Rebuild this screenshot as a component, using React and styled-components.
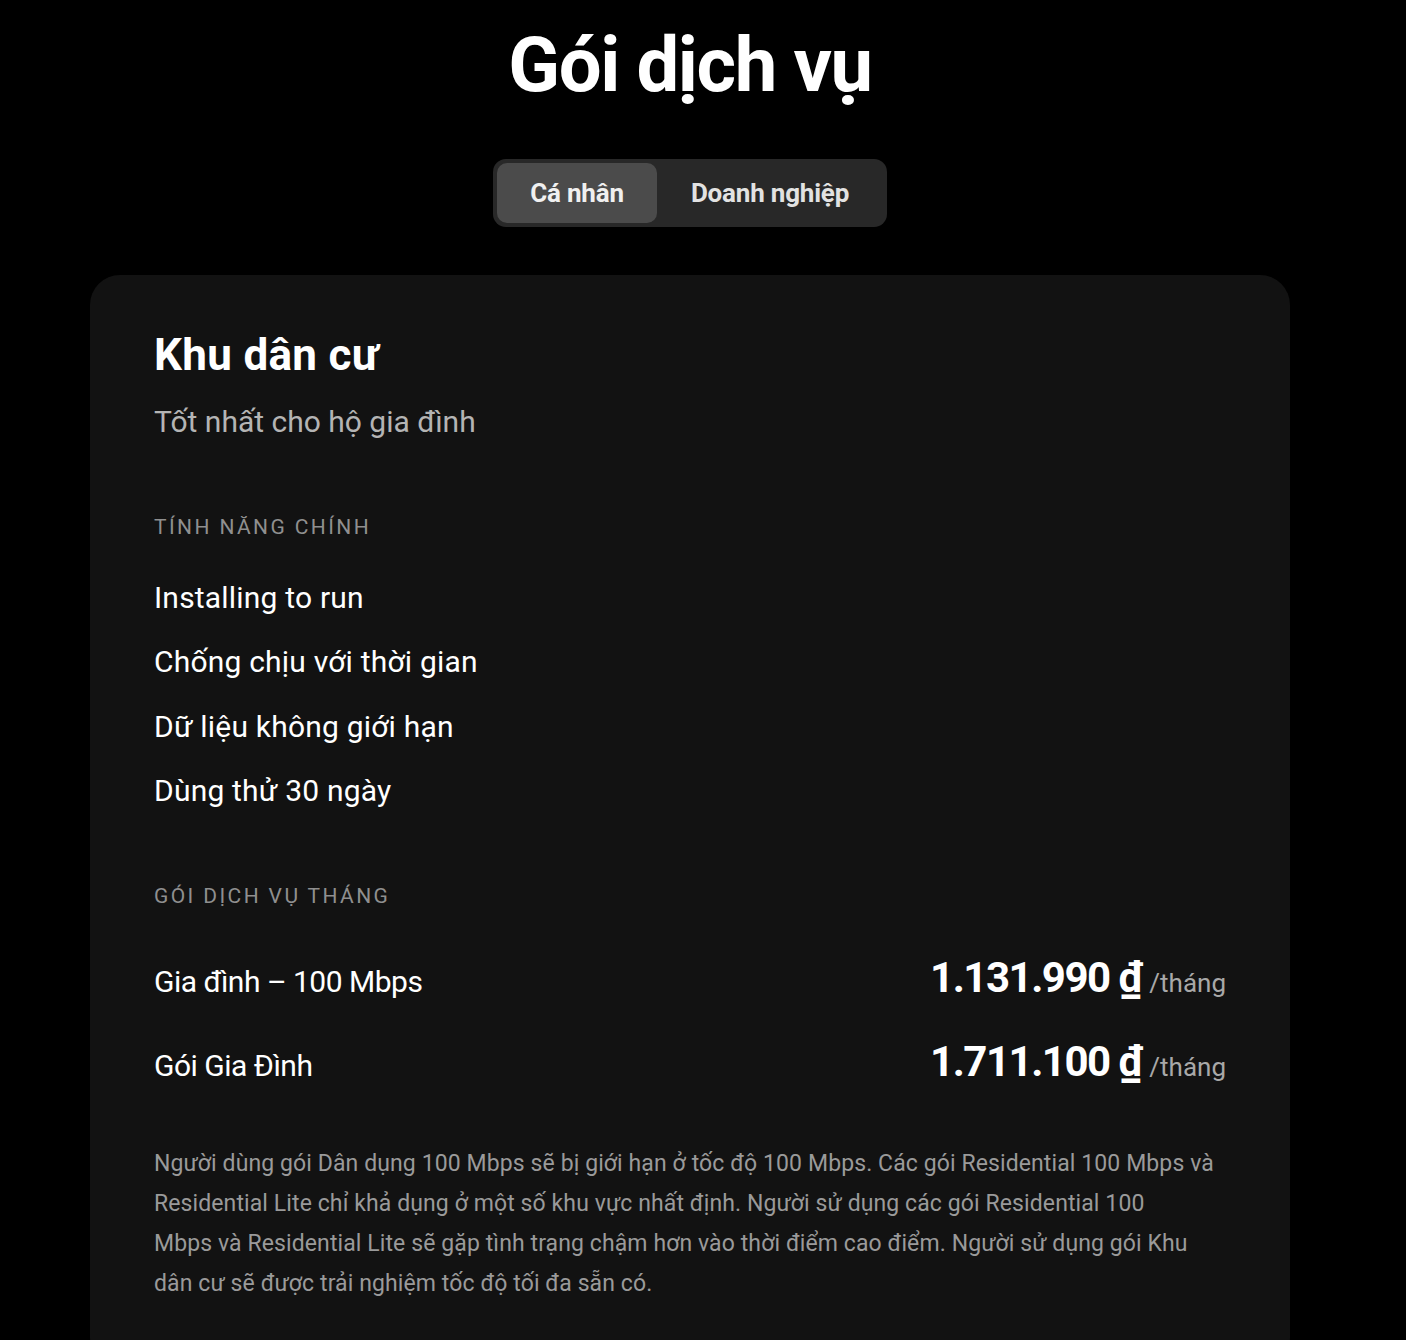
import React, { useState } from "react";
import styled, { createGlobalStyle } from "styled-components";

const Global = createGlobalStyle`
  html, body { margin: 0; padding: 0; background: #000; }
  body { font-family: Roboto, "Noto Sans", "Liberation Sans", sans-serif; color: #fff; }
`;

const Page = styled.main`
  width: 1380px;
  padding-top: 20px;
  padding-bottom: 80px;
  display: flex;
  flex-direction: column;
  align-items: center;
`;

const Title = styled.h1`
  margin: 0;
  font-size: 76px;
  line-height: 91px;
  font-weight: 700;
  letter-spacing: -1.4px;
  color: #fff;
`;

const Toggle = styled.div`
  margin-top: 48px;
  display: flex;
  padding: 4px;
  background: #282828;
  border-radius: 13px;
`;

const ToggleButton = styled.button`
  height: 60px;
  width: ${(p) => p.$w}px;
  border: none;
  border-radius: 10px;
  background: ${(p) => (p.$active ? "#4b4b4b" : "transparent")};
  color: ${(p) => (p.$active ? "#f0f0f0" : "#e2e2e2")};
  font-family: inherit;
  font-size: 26px;
  font-weight: 700;
  letter-spacing: -0.2px;
  cursor: pointer;
`;

const Card = styled.section`
  margin-top: 48px;
  width: 1200px;
  box-sizing: border-box;
  background: #121212;
  border-radius: 30px;
  padding: 54px 64px 64px;
`;

const PlanName = styled.h2`
  margin: 0;
  font-size: 44px;
  line-height: 52.8px;
  font-weight: 700;
  letter-spacing: 0.3px;
`;

const Subtitle = styled.p`
  margin: 20px 0 0;
  font-size: 30px;
  line-height: 40px;
  color: #b4b4b4;
`;

const Label = styled.h3`
  margin: ${(p) => p.$mt}px 0 0;
  font-size: 21px;
  line-height: 28px;
  font-weight: 400;
  letter-spacing: 2.4px;
  color: #8f8f8f;
  text-transform: uppercase;
`;

const FeatureList = styled.ul`
  list-style: none;
  margin: 36px 0 0;
  padding: 0;
  display: flex;
  flex-direction: column;
  gap: 22.5px;
`;

const Feature = styled.li`
  font-size: 30px;
  line-height: 42px;
  letter-spacing: 0.2px;
  color: #fff;
`;

const Rows = styled.div`
  margin-top: 40px;
  display: flex;
  flex-direction: column;
  gap: 23px;
`;

const Row = styled.div`
  display: flex;
  justify-content: space-between;
  align-items: baseline;
  line-height: 56px;
`;

const RowName = styled.span`
  font-size: 30px;
  letter-spacing: -0.5px;
  color: #fff;
`;

const PriceWrap = styled.span`
  display: flex;
  align-items: baseline;
  gap: 8px;
`;

const Price = styled.span`
  font-size: 42px;
  font-weight: 700;
  letter-spacing: -1.5px;
  color: #fff;
`;

const Unit = styled.span`
  font-size: 26px;
  color: #a8a8a8;
`;

const Note = styled.p`
  margin: 49px 0 0;
  font-size: 23px;
  line-height: 40px;
  letter-spacing: 0.1px;
  color: #9a9a9a;
  white-space: nowrap;
`;

const plans = [
  { name: "Gia đình – 100 Mbps", price: "1.131.990 ₫" },
  { name: "Gói Gia Đình", price: "1.711.100 ₫" },
];

const features = [
  "Installing to run",
  "Chống chịu với thời gian",
  "Dữ liệu không giới hạn",
  "Dùng thử 30 ngày",
];

const noteLines = [
  "Người dùng gói Dân dụng 100 Mbps sẽ bị giới hạn ở tốc độ 100 Mbps. Các gói Residential 100 Mbps và",
  "Residential Lite chỉ khả dụng ở một số khu vực nhất định. Người sử dụng các gói Residential 100",
  "Mbps và Residential Lite sẽ gặp tình trạng chậm hơn vào thời điểm cao điểm. Người sử dụng gói Khu",
  "dân cư sẽ được trải nghiệm tốc độ tối đa sẵn có.",
];

export default function App() {
  const [tab, setTab] = useState(0);
  return (
    <>
      <Global />
      <Page>
        <Title>Gói dịch vụ</Title>
        <Toggle>
          <ToggleButton $w={160} $active={tab === 0} onClick={() => setTab(0)}>
            Cá nhân
          </ToggleButton>
          <ToggleButton $w={226} $active={tab === 1} onClick={() => setTab(1)}>
            Doanh nghiệp
          </ToggleButton>
        </Toggle>
        <Card>
          <PlanName>Khu dân cư</PlanName>
          <Subtitle>Tốt nhất cho hộ gia đình</Subtitle>
          <Label $mt={71}>Tính năng chính</Label>
          <FeatureList>
            {features.map((f) => (
              <Feature key={f}>{f}</Feature>
            ))}
          </FeatureList>
          <Label $mt={70}>Gói dịch vụ tháng</Label>
          <Rows>
            {plans.map((p) => (
              <Row key={p.name}>
                <RowName>{p.name}</RowName>
                <PriceWrap>
                  <Price>{p.price}</Price>
                  <Unit>/tháng</Unit>
                </PriceWrap>
              </Row>
            ))}
          </Rows>
          <Note>
            {noteLines.map((l, i) => (
              <React.Fragment key={i}>
                {l}
                {i < noteLines.length - 1 && <br />}
              </React.Fragment>
            ))}
          </Note>
        </Card>
      </Page>
    </>
  );
}
